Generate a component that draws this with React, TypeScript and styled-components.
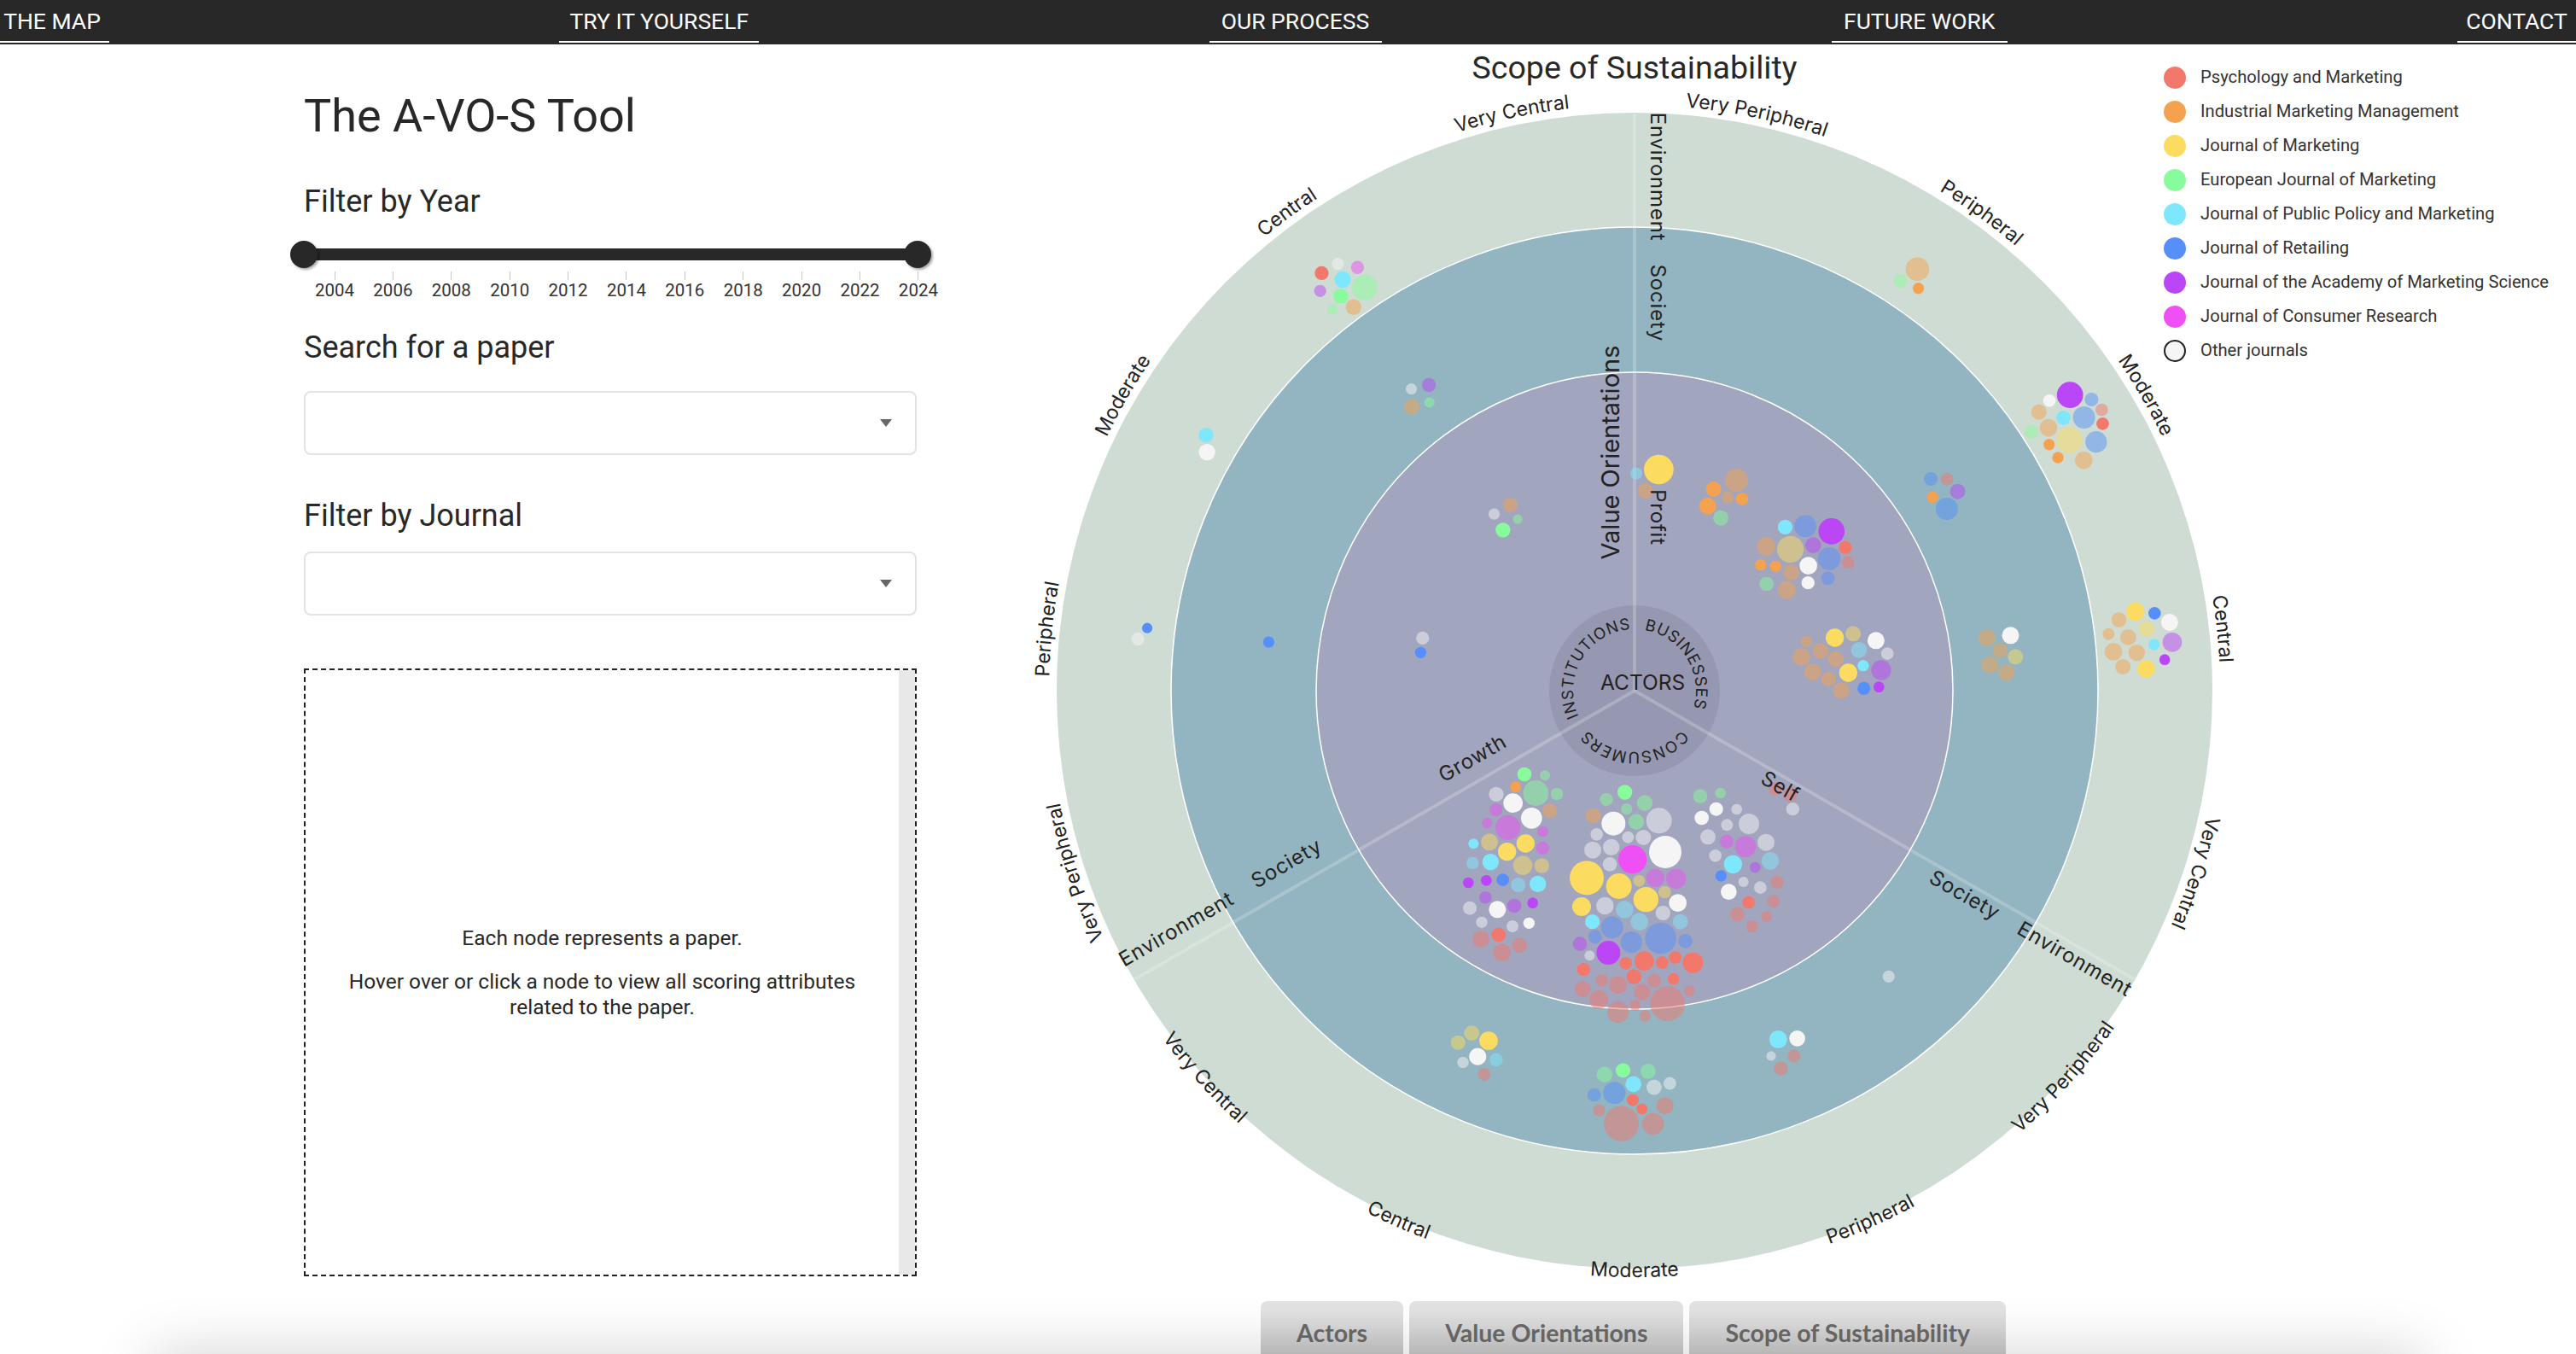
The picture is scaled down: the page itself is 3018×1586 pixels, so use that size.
import React from "react";
import styled, { createGlobalStyle } from "styled-components";

const SANS = '"Roboto", "Liberation Sans", sans-serif';
const CHART = '"Inter", "Noto Sans", sans-serif';

const CX = 1915;
const CY = 809;

const GlobalStyle = createGlobalStyle`
  html, body {
    margin: 0;
    padding: 0;
    background: #fff;
    color: #282828;
    font-family: ${SANS};
  }
  #root {
    height: 1586px;
    overflow: hidden;
    position: relative;
  }
`;

const Nav = styled.nav`
  height: 52px;
  background: #282828;
  display: flex;
  justify-content: space-between;
`;

const NavLink = styled.a<{ $w: number; $shift?: number }>`
  box-sizing: border-box;
  width: ${(p) => p.$w}px;
  height: 50px;
  line-height: 50px;
  border-bottom: 2px solid #fff;
  color: #fff;
  font-size: 26.5px;
  text-align: center;
  padding-right: ${(p) => p.$shift || 0}px;
  white-space: nowrap;
`;

const Main = styled.main`
  display: flex;
  height: 1472px;
`;

const Sidebar = styled.aside`
  box-sizing: border-box;
  flex: none;
  width: 718px;
  margin-left: 356px;
  padding-top: 54px;
`;

const Title = styled.h1`
  margin: 0;
  font-size: 54px;
  line-height: 60px;
  font-weight: 400;
  white-space: nowrap;
`;

const Label = styled.h3<{ $top: number }>`
  margin: ${(p) => p.$top}px 0 0;
  font-size: 36px;
  line-height: 44px;
  font-weight: 400;
  white-space: nowrap;
`;

const Slider = styled.div`
  position: relative;
  margin-top: 24px;
  height: 32px;
  display: flex;
  align-items: center;
`;

const Track = styled.div`
  width: 100%;
  height: 14px;
  background: #282828;
`;

const Handle = styled.span<{ $side: "left" | "right" }>`
  position: absolute;
  top: 0;
  ${(p) => (p.$side === "left" ? "left: -16px" : "right: -17px")};
  width: 32px;
  height: 32px;
  border-radius: 50%;
  background: #282828;
  box-shadow: 2px 2px 3px rgba(0, 0, 0, 0.35);
`;

const Ticks = styled.div`
  display: flex;
  justify-content: space-between;
  width: 744px;
  margin: 4px 0 0 6px;
`;

const Tick = styled.div`
  width: 60px;
  display: flex;
  flex-direction: column;
  align-items: center;
  font-size: 20.5px;
  line-height: 24px;
  color: #333;

  &::before {
    content: "";
    width: 1px;
    height: 10px;
    background: #c8c8c8;
  }
`;

const Select = styled.div<{ $top: number }>`
  box-sizing: border-box;
  height: 75px;
  margin-top: ${(p) => p.$top}px;
  border: 2px solid #e3e3e3;
  border-radius: 8px;
  display: flex;
  align-items: center;
  justify-content: flex-end;
  padding-right: 27px;

  &::after {
    content: "";
    border-style: solid;
    border-width: 9px 7px 0;
    border-color: #666 transparent transparent;
  }
`;

const Info = styled.div`
  box-sizing: border-box;
  display: flex;
  height: 712px;
  margin-top: 62px;
  border: 2px dashed #222;
`;

const InfoBody = styled.div`
  flex: 1;
  display: flex;
  flex-direction: column;
  justify-content: center;
  padding: 0 40px;
  text-align: center;
  font-size: 24.5px;
  line-height: 30px;

  p {
    margin: 0 0 21px;
  }

  p:last-child {
    margin-bottom: 0;
  }
`;

const ScrollTrack = styled.div`
  flex: none;
  width: 19px;
  background: #e8e8e8;
`;

const ChartArea = styled.section`
  position: relative;
  flex: 1;
`;

const ChartSvg = styled.svg`
  display: block;
  width: 1944px;
  height: 1472px;
`;

const Legend = styled.ul`
  position: absolute;
  left: 1461px;
  top: 19px;
  margin: 0;
  padding: 0;
  list-style: none;
`;

const LegendRow = styled.li`
  display: flex;
  align-items: center;
  gap: 17px;
  height: 40px;
  font-size: 20.2px;
  color: #333;
  white-space: nowrap;
`;

const LegendName = styled.span`
  margin-top: -3px;
`;

const Dot = styled.span<{ $color: string; $ring?: boolean }>`
  box-sizing: border-box;
  width: 26px;
  height: 26px;
  border-radius: 50%;
  background: ${(p) => p.$color};
  border: ${(p) => (p.$ring ? "2px solid #222" : "none")};
`;

const Tabs = styled.div`
  display: flex;
  gap: 7px;
  margin-left: 1477px;
`;

const Tab = styled.button`
  height: 74px;
  padding: 0 42px;
  border: none;
  border-radius: 8px 8px 0 0;
  background: linear-gradient(#e2e2e2 15%, #c8c8c8 85%);
  color: #6a6a6a;
  font-family: "Lato", sans-serif;
  font-size: 28.5px;
  font-weight: 700;
  line-height: 34px;
  white-space: nowrap;
`;

const BottomShade = styled.div`
  position: absolute;
  left: 190px;
  right: 190px;
  top: 1600px;
  height: 30px;
  box-shadow: 0 0 70px 10px rgba(0, 0, 0, 0.22);
  pointer-events: none;
`;

const NAV_LINKS: [string, number, number?][] = [
  ["THE MAP", 128, 6],
  ["TRY IT YOURSELF", 234],
  ["OUR PROCESS", 202],
  ["FUTURE WORK", 206],
  ["CONTACT", 139],
];

const YEARS = [2004, 2006, 2008, 2010, 2012, 2014, 2016, 2018, 2020, 2022, 2024];

const COLORS: Record<string, string> = {
  r: "#f1786b",
  o: "#f4a24f",
  y: "#fbdc60",
  g: "#88fc9c",
  c: "#7fe7fc",
  b: "#568ffa",
  p: "#bb46f5",
  m: "#ee50f5",
  w: "#f5f5f5",
};

const LEGEND: [string, string][] = [
  ["Psychology and Marketing", COLORS.r],
  ["Industrial Marketing Management", COLORS.o],
  ["Journal of Marketing", COLORS.y],
  ["European Journal of Marketing", COLORS.g],
  ["Journal of Public Policy and Marketing", COLORS.c],
  ["Journal of Retailing", COLORS.b],
  ["Journal of the Academy of Marketing Science", COLORS.p],
  ["Journal of Consumer Research", COLORS.m],
  ["Other journals", COLORS.w],
];

// measured on crops of the chart: origin + scale of the crop, then "x,y,r,journal"
// a capital journal letter is a faded node
const CLUSTERS: { ox: number; oy: number; sx: number; sy: number; nodes: string }[] = [
  {
    ox: 1650,
    oy: 880,
    sx: 3,
    sy: 3,
    nodes:
      "408,81,25,g 480,85,18,G 377,125,19,o 448,147,45,G 522,150,22,G 309,151,26,W 368,182,34,w 497,209,26,O 308,206,23,M 433,235,37,w 277,252,18,M 350,268,44,M 473,282,19,M 285,319,30,Y 412,324,32,y 229,325,18,c 472,340,23,M 347,353,32,y 226,393,22,C 289,389,29,c 402,401,34,Y 469,402,26,Y 211,462,19,p 274,454,19,p 332,452,22,b 386,470,26,C 455,466,29,c 271,514,22,P 216,551,24,W 313,556,30,w 372,543,25,P 437,533,19,p 258,601,20,W 366,615,21,W 424,604,20,w 317,645,25,r 255,660,30,R 391,682,26,R 329,707,31,R " +
      "761,144,26,g 696,169,23,G 831,182,28,G 767,203,20,G 650,227,27,O 721,254,42,w 801,248,28,G 881,244,45,W 662,292,22,W 772,302,21,W 826,303,27,W 648,347,30,W 713,337,29,W 903,354,57,w 788,380,50,m 708,397,25,W 627,445,60,y 740,474,45,y 811,455,21,Y 868,445,32,M 941,448,35,M 835,521,44,y 901,495,22,Y 947,533,31,w 609,546,33,y 691,543,31,W 760,556,31,C 895,568,26,W 647,599,26,c 812,599,31,C 956,599,27,C 716,619,39,B 656,652,24,B 784,671,38,B 887,657,55,B 974,667,25,B 603,677,25,P 703,708,42,p 637,718,18,W 764,745,22,r 829,737,34,r 892,743,22,r 938,725,22,r 1000,743,36,r 616,767,23,r 793,792,26,r 680,805,22,R 864,806,24,R 932,800,20,r 737,821,31,R 613,836,28,R 822,846,29,R 988,842,19,R 669,873,33,R 911,887,61,R 737,917,38,R 797,893,19,R 832,930,20,R " +
      "1026,158,25,G 1097,147,19,G 1082,203,24,w 1154,204,19,W 1031,234,25,w 1120,259,21,W 1197,255,36,W 1053,301,27,W 1119,317,24,M 1185,335,37,M 1257,320,30,W 1079,367,22,W 1141,397,32,c 1272,385,31,C 1219,408,19,P 1099,438,20,b 1178,459,18,W 1237,479,22,W 1296,460,23,R 1126,494,28,w 1196,531,22,r 1283,527,22,R 1157,572,25,R 1258,580,19,R 1208,615,21,R 1290,132,23,R 1342,152,25,R 1351,203,23,W",
  },
  {
    ox: 2000,
    oy: 400,
    sx: 2.613,
    sy: 3,
    nodes:
      "90,488,41,O 20,519,27,o 63,548,22,O 107,553,22,o 2,578,30,o 42,620,27,G " +
      "239,652,26,c 301,649,39,B 381,667,46,p 181,720,33,O 255,730,47,Y 325,716,28,P 423,724,23,r 374,763,40,B 432,777,22,R 164,785,20,o 210,790,20,o 258,811,28,O 310,788,31,w 370,832,24,B 309,848,23,w 182,852,25,G 244,873,32,O " +
      "304,1054,20,O 391,1041,32,y 447,1027,27,Y 517,1051,30,w 552,1097,22,W 347,1088,28,O 289,1108,31,O 394,1116,28,O 465,1084,28,C 323,1161,30,O 432,1164,32,y 478,1139,20,c 533,1155,35,P 372,1186,26,O 411,1227,29,O 480,1219,23,b 526,1214,19,p " +
      "685,483,24,B 735,484,22,R 767,527,27,P 690,547,20,o 734,588,39,B " +
      "857,1041,30,O 929,1033,30,w 897,1085,27,O 944,1108,27,Y 865,1136,30,O 917,1163,29,O " +
      "1111,188,46,p 1177,204,24,B 1048,208,22,w 1208,240,22,R 1016,248,27,O 1091,268,25,c 1154,267,39,B 1211,289,22,r 1045,303,31,O 993,317,24,G 1109,347,46,Y 1191,353,38,B 1047,362,20,o 1074,408,20,o 1153,417,31,O " +
      "1311,949,32,y 1370,955,22,b 1416,987,30,w 1261,978,26,O 1345,1010,27,Y 1229,1028,21,O 1289,1039,28,O 1424,1057,34,P 1368,1065,20,c 1244,1090,31,O 1315,1094,29,O 1401,1118,19,p 1273,1143,27,O 1344,1151,31,y",
  },
  {
    ox: 2100,
    oy: 0,
    sx: 1.708,
    sy: 1.96,
    nodes: "250,618,27,O 216,645,16,G 252,662,13,o",
  },
  {
    ox: 1200,
    oy: 0,
    sx: 1.742,
    sy: 1.96,
    nodes:
      "607,627,16,r 640,606,14,W 680,614,15,M 650,642,19,c 604,668,14,P 695,660,29,G 646,680,17,g 629,711,12,G 672,705,18,O " +
      "371,999,17,c 373,1038,19,w 251,1442,12,b 232,1467,15,W " +
      "826,884,16,P 790,893,13,W 827,924,12,G 791,934,18,O 499,1474,13,b " +
      "992,1159,17,O 959,1180,13,W 1007,1192,11,G 977,1217,17,g 813,1465,15,W 809,1498,13,b " +
      "1295,1078,34,y 1249,1087,14,C 1268,1127,18,O",
  },
  {
    ox: 1200,
    oy: 1000,
    sx: 1.568,
    sy: 2.676,
    nodes:
      "822,562,24,Y 853,586,29,y 797,592,23,Y 833,636,27,w 867,646,21,C 806,654,18,W 845,691,20,R " +
      "1100,679,23,g 1066,692,25,G 1146,682,24,G 1119,722,25,c 1157,732,24,W 1186,720,20,W 1047,756,21,B 1084,750,35,B 1118,772,19,r 1135,800,17,r 1177,790,27,R 1056,805,19,R 1097,846,55,R 1155,847,34,R " +
      "1385,582,28,c 1420,579,25,w 1372,634,15,W 1414,634,20,R 1390,673,22,R 1588,385,19,W",
  },
];

const polar = (r: number, deg: number) => {
  const a = (deg * Math.PI) / 180;
  return [CX + r * Math.sin(a), CY - r * Math.cos(a)];
};

// arc around the chart centre, clockwise or not; text on it runs in path direction
const arc = (r: number, mid: number, span: number, clockwise: boolean) => {
  const [from, to] = clockwise ? [mid - span, mid + span] : [mid + span, mid - span];
  const [x1, y1] = polar(r, from);
  const [x2, y2] = polar(r, to);
  return `M${x1} ${y1}A${r} ${r} 0 ${span * 2 > 180 ? 1 : 0} ${clockwise ? 1 : 0} ${x2} ${y2}`;
};

const SCOPE = ["Very Peripheral", "Peripheral", "Moderate", "Central", "Very Central"];

const RING_LABELS = [0, 120, 240].flatMap((sector) =>
  SCOPE.map((text, i) => ({
    text,
    angle: sector + 12 + i * 24,
    clockwise: sector !== 120,
  }))
);

const ACTOR_LABELS = [
  { text: "INSTITUTIONS", angle: 301 },
  { text: "BUSINESSES", angle: 58 },
  { text: "CONSUMERS", angle: 180 },
];

const AXIS_LABELS: [string, number, number, number][] = [
  ["Environment", 1942, 207, 90],
  ["Society", 1942, 355, 90],
  ["Profit", 1942, 606, 90],
  ["Environment", 1378, 1088, -30],
  ["Society", 1507, 1011, -30],
  ["Growth", 1725, 888, -30],
  ["Self", 2086, 921, 30],
  ["Society", 2302, 1048, 30],
  ["Environment", 2431, 1123, 30],
];

function Nodes() {
  return (
    <g>
      {CLUSTERS.flatMap((c, i) =>
        c.nodes.split(" ").map((entry, j) => {
          const [x, y, r, code] = entry.split(",");
          return (
            <circle
              key={`${i}-${j}`}
              cx={c.ox + Number(x) / c.sx}
              cy={c.oy + Number(y) / c.sy}
              r={Number(r) / c.sy}
              fill={COLORS[code.toLowerCase()]}
              fillOpacity={code === code.toUpperCase() ? 0.5 : 1}
            />
          );
        })
      )}
    </g>
  );
}

function Chart() {
  return (
    <ChartSvg viewBox="1074 52 1944 1472" role="img">
      <text x={CX} y={92} textAnchor="middle" fontFamily={SANS} fontSize={37.5} fill="#282828">
        Scope of Sustainability
      </text>

      <circle cx={CX} cy={CY} r={677} fill="#cedcd3" />
      <circle cx={CX} cy={CY} r={543} fill="#93b4c1" stroke="#fff" strokeWidth={1.5} />
      <circle cx={CX} cy={CY} r={373} fill="#a2a5be" stroke="#fff" strokeWidth={1.5} />
      <circle cx={CX} cy={CY} r={100} fill="#9598b0" />

      {[0, 120, 240].map((deg) => {
        const [x, y] = polar(676, deg);
        return <line key={deg} x1={CX} y1={CY} x2={x} y2={y} stroke="#fff" strokeOpacity={0.22} strokeWidth={4} />;
      })}

      <Nodes />

      <g fontFamily={CHART} fill="#222">
        {RING_LABELS.map((l, i) => (
          <g key={i}>
            <path id={`ring-${i}`} d={arc(l.clockwise ? 686 : 687, l.angle, 14, l.clockwise)} fill="none" />
            <text fontSize={23}>
              <textPath href={`#ring-${i}`} startOffset="50%" textAnchor="middle">
                {l.text}
              </textPath>
            </text>
          </g>
        ))}

        {AXIS_LABELS.map(([text, x, y, rot], i) => (
          <text
            key={i}
            transform={`translate(${x} ${y}) rotate(${rot})`}
            textAnchor="middle"
            dominantBaseline="central"
            fontSize={24}
            letterSpacing={0.8}
          >
            {text}
          </text>
        ))}

        <text transform="translate(1886 530) rotate(-90)" textAnchor="middle" dominantBaseline="central" fontSize={29}>
          Value Orientations
        </text>

        <text x={1875} y={808} fontSize={24.5}>
          ACTORS
        </text>
        {ACTOR_LABELS.map((l, i) => (
          <g key={l.text}>
            <path id={`actor-${i}`} d={arc(72, l.angle, 70, true)} fill="none" />
            <text fontSize={18.5} letterSpacing={0.8}>
              <textPath href={`#actor-${i}`} startOffset="50%" textAnchor="middle">
                {l.text}
              </textPath>
            </text>
          </g>
        ))}
      </g>
    </ChartSvg>
  );
}

export default function App() {
  return (
    <>
      <GlobalStyle />
      <Nav>
        {NAV_LINKS.map(([text, w, shift]) => (
          <NavLink key={text} $w={w} $shift={shift}>
            {text}
          </NavLink>
        ))}
      </Nav>
      <Main>
        <Sidebar>
          <Title>The A-VO-S Tool</Title>
          <Label $top={48}>Filter by Year</Label>
          <Slider>
            <Track />
            <Handle $side="left" />
            <Handle $side="right" />
          </Slider>
          <Ticks>
            {YEARS.map((y) => (
              <Tick key={y}>{y}</Tick>
            ))}
          </Ticks>
          <Label $top={33}>Search for a paper</Label>
          <Select $top={29} />
          <Label $top={49}>Filter by Journal</Label>
          <Select $top={20} />
          <Info>
            <InfoBody>
              <p>Each node represents a paper.</p>
              <p>Hover over or click a node to view all scoring attributes related to the paper.</p>
            </InfoBody>
            <ScrollTrack />
          </Info>
        </Sidebar>
        <ChartArea>
          <Chart />
          <Legend>
            {LEGEND.map(([name, color], i) => (
              <LegendRow key={name}>
                <Dot $color={color} $ring={i === LEGEND.length - 1} />
                <LegendName>{name}</LegendName>
              </LegendRow>
            ))}
          </Legend>
        </ChartArea>
      </Main>
      <Tabs>
        <Tab>Actors</Tab>
        <Tab>Value Orientations</Tab>
        <Tab>Scope of Sustainability</Tab>
      </Tabs>
      <BottomShade />
    </>
  );
}
